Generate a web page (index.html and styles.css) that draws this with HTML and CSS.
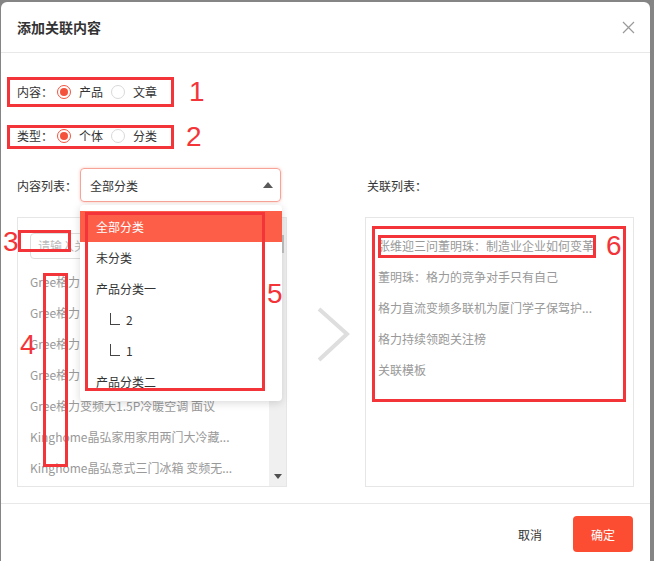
FILE: index.html
```html
<!DOCTYPE html>
<html lang="zh-CN">
<head>
    <meta charset="UTF-8">
    <meta name="viewport" content="width=device-width, initial-scale=1.0">
    <title>添加关联内容</title>
    <link rel="stylesheet" href="styles.css">
</head>
<body>

    <div class="dialog">
        <div class="dialog-header">
            <h3>添加关联内容</h3>
            <span class="close-btn">
                <svg width="13" height="13" viewBox="0 0 13 13"><path d="M1 1L12 12M12 1L1 12" stroke="#9a9a9a" stroke-width="1.2" fill="none"/></svg>
            </span>
        </div>

        <div class="dialog-body">
            <!-- 内容 -->
            <div class="form-row">
                <span class="form-label">内容<span class="colon">：</span></span>
                <label class="radio checked"><i></i>产品</label>
                <label class="radio"><i></i>文章</label>
            </div>

            <!-- 类型 -->
            <div class="form-row second">
                <span class="form-label">类型<span class="colon">：</span></span>
                <label class="radio checked"><i></i>个体</label>
                <label class="radio"><i></i>分类</label>
            </div>

            <div class="lists">
                <div class="list-col">
                    <div class="list-head">
                        <span class="head-label">内容列表<span class="colon">：</span></span>
                        <div class="select">
                            <span>全部分类</span>
                            <span class="caret"></span>
                            <ul class="dropdown">
                                <li class="active">全部分类</li>
                                <li>未分类</li>
                                <li>产品分类一</li>
                                <li class="sub"><span class="corner"></span>2</li>
                                <li class="sub"><span class="corner"></span>1</li>
                                <li>产品分类二</li>
                            </ul>
                        </div>
                    </div>
                    <div class="panel">
                        <div class="panel-inner">
                            <div class="search">请输入关键字</div>
                            <ul class="items">
                                <li>Gree格力变频大1.5P冷暖空调 面议</li>
                                <li>Gree格力变频大1.5P冷暖空调 面议</li>
                                <li>Gree格力变频大1.5P冷暖空调 面议</li>
                                <li>Gree格力变频大1.5P冷暖空调 面议</li>
                                <li>Gree格力变频大1.5P冷暖空调 面议</li>
                                <li>Kinghome晶弘家用家用两门大冷藏...</li>
                                <li>Kinghome晶弘意式三门冰箱 变频无...</li>
                            </ul>
                        </div>
                        <div class="scrollbar">
                            <span class="thumb"></span>
                            <span class="down"></span>
                        </div>
                    </div>
                </div>

                <div class="arrow-col">
                    <svg width="34" height="56" viewBox="0 0 34 56"><polyline points="2,2 30,27 2,53" stroke="#dedede" stroke-width="4" fill="none"/></svg>
                </div>

                <div class="list-col">
                    <div class="list-head">
                        <span class="head-label">关联列表<span class="colon">：</span></span>
                    </div>
                    <div class="panel">
                        <ul class="items related">
                            <li>张维迎三问董明珠<span class="colon">：</span>制造业企业如何变革</li>
                            <li>董明珠<span class="colon">：</span>格力的竞争对手只有自己</li>
                            <li>格力直流变频多联机为厦门学子保驾护...</li>
                            <li>格力持续领跑关注榜</li>
                            <li>关联模板</li>
                        </ul>
                    </div>
                </div>
            </div>
        </div>

        <div class="dialog-footer">
            <button class="btn-cancel">取消</button>
            <button class="btn-ok">确定</button>
        </div>

        <!-- 标注 -->
        <div class="mark m1"></div>
        <div class="mark m2"></div>
        <div class="mark m3"></div>
        <div class="mark m4"></div>
        <div class="mark m5"></div>
        <div class="mark m6"></div>
        <div class="mark m7"></div>
        <span class="num n1">1</span>
        <span class="num n2">2</span>
        <span class="num n3">3</span>
        <span class="num n4">4</span>
        <span class="num n5">5</span>
        <span class="num n6">6</span>
    </div>

</body>
</html>
```

FILE: styles.css
```css
body {
    margin: 0;
    padding: 0;
    height: 561px;
    overflow: hidden;
    background-color: #858585;
    font-family: "Noto Sans CJK SC", "Noto Sans", sans-serif;
    font-size: 12px;
    color: #333;
}
ul {
    list-style: none;
    margin: 0;
    padding: 0;
}
.colon {
    font-family: "Noto Sans CJK JP", "Noto Sans CJK SC", sans-serif;
}
.dialog {
    position: relative;
    width: 649px;
    height: 559px;
    overflow: hidden;
    margin: 2px 0 0 1px;
    background-color: #fff;
    border-radius: 6px 6px 0 0;
}
.dialog-header {
    height: 50px;
    border-bottom: 1px solid #e8e8e8;
    display: flex;
    align-items: center;
    justify-content: space-between;
    padding: 0 15px 0 16px;
}
.dialog-header h3 {
    margin: 0;
    font-size: 14px;
    font-weight: bold;
    color: #333;
}
.close-btn {
    display: flex;
}
.dialog-body {
    padding: 24px 16px 16px;
}
.form-row {
    display: flex;
    align-items: center;
    height: 30px;
    line-height: 30px;
}
.form-row.second {
    margin-top: 14px;
}
.form-label {
    width: 40px;
}
.radio {
    display: flex;
    align-items: center;
    margin-right: 8px;
    color: #333;
}
.radio i {
    width: 14px;
    height: 14px;
    box-sizing: border-box;
    border: 1px solid #d9d9d9;
    border-radius: 50%;
    margin-right: 8px;
    display: flex;
    align-items: center;
    justify-content: center;
}
.radio.checked i {
    border-color: #f4523b;
}
.radio.checked i::after {
    content: "";
    width: 8px;
    height: 8px;
    border-radius: 50%;
    background-color: #f4523b;
}
.lists {
    display: grid;
    grid-template-columns: 270px 78px 1fr;
    margin-top: 17px;
}
.list-head {
    display: flex;
    align-items: center;
    height: 34px;
}
.head-label {
    width: 63px;
    color: #333;
}
.list-col:last-child .head-label {
    padding-left: 2px;
}
.select {
    position: relative;
    width: 201px;
    height: 34px;
    box-sizing: border-box;
    border: 1px solid #f8a397;
    border-radius: 4px;
    box-shadow: 0 0 3px rgba(250, 90, 70, 0.35);
    display: flex;
    align-items: center;
    justify-content: space-between;
    padding: 0 7px 0 9px;
}
.caret {
    width: 0;
    height: 0;
    border-left: 5px solid transparent;
    border-right: 5px solid transparent;
    border-bottom: 6px solid #5a5a5a;
}
.dropdown {
    position: absolute;
    z-index: 5;
    top: 36px;
    left: -1px;
    width: 202px;
    height: 196px;
    box-sizing: border-box;
    padding-top: 6px;
    background-color: #fff;
    border-radius: 4px;
    box-shadow: 0 2px 8px rgba(0, 0, 0, 0.15);
    overflow: hidden;
}
.dropdown li {
    height: 31px;
    line-height: 31px;
    padding-left: 16px;
    color: #333;
}
.dropdown li.active {
    background-color: #fd5e48;
    color: #fff;
}
.dropdown li.sub {
    display: flex;
    align-items: center;
    padding-left: 30px;
}
.corner {
    width: 9px;
    height: 11px;
    border-left: 1px solid #444;
    border-bottom: 1px solid #444;
    margin: 0 6px 1px 0;
}
.panel {
    margin-top: 15px;
    height: 270px;
    box-sizing: border-box;
    border: 1px solid #e6e6e6;
    display: flex;
}
.panel-inner {
    flex: 1;
    padding: 15px 12px 0;
    overflow: hidden;
}
.search {
    height: 26px;
    line-height: 24px;
    box-sizing: border-box;
    border: 1px solid #ddd;
    border-radius: 4px;
    padding-left: 7px;
    color: #bbb;
}
.items {
    margin-top: 7px;
}
.items li {
    height: 31px;
    line-height: 31px;
    color: #999;
    white-space: nowrap;
    overflow: hidden;
}
.items.related {
    margin-top: 0;
    padding: 12px 12px 0;
}
.scrollbar {
    position: relative;
    width: 17px;
    background-color: #f0f0f0;
}
.thumb {
    position: absolute;
    top: 17px;
    left: 2px;
    width: 13px;
    height: 18px;
    background-color: #c1c1c1;
}
.down {
    position: absolute;
    bottom: 7px;
    left: 5px;
    width: 0;
    height: 0;
    border-left: 4px solid transparent;
    border-right: 4px solid transparent;
    border-top: 5px solid #505050;
}
.arrow-col {
    padding: 139px 0 0 30px;
}
.dialog-footer {
    border-top: 1px solid #e8e8e8;
    display: flex;
    justify-content: flex-end;
    padding: 12px 17px;
}
.dialog-footer button {
    width: 60px;
    height: 36px;
    border: none;
    border-radius: 4px;
    font-family: inherit;
    font-size: 12px;
    cursor: pointer;
}
.btn-cancel {
    background: none;
    color: #333;
    margin-right: 13px;
}
.btn-ok {
    background-color: #fc4d33;
    color: #fff;
}
.mark {
    position: absolute;
    z-index: 10;
    box-sizing: border-box;
    border: 3px solid #f3353a;
}
.m1 { left: 6px; top: 75px; width: 167px; height: 30px; }
.m2 { left: 6px; top: 123px; width: 167px; height: 24px; }
.m3 { left: 17px; top: 228px; width: 53px; height: 22px; }
.m4 { left: 42px; top: 271px; width: 25px; height: 194px; }
.m5 { left: 84px; top: 210px; width: 180px; height: 179px; }
.m6 { left: 377px; top: 233px; width: 218px; height: 23px; }
.m7 { left: 371px; top: 224px; width: 254px; height: 176px; }
.num {
    position: absolute;
    z-index: 10;
    font-family: "Liberation Sans", Arial, sans-serif;
    font-size: 28px;
    line-height: 28px;
    color: #f3353a;
}
.n1 { left: 188px; top: 76px; }
.n2 { left: 185px; top: 121px; }
.n3 { left: 2px; top: 226px; }
.n4 { left: 19px; top: 329px; }
.n5 { left: 266px; top: 278px; }
.n6 { left: 605px; top: 230px; }
```
